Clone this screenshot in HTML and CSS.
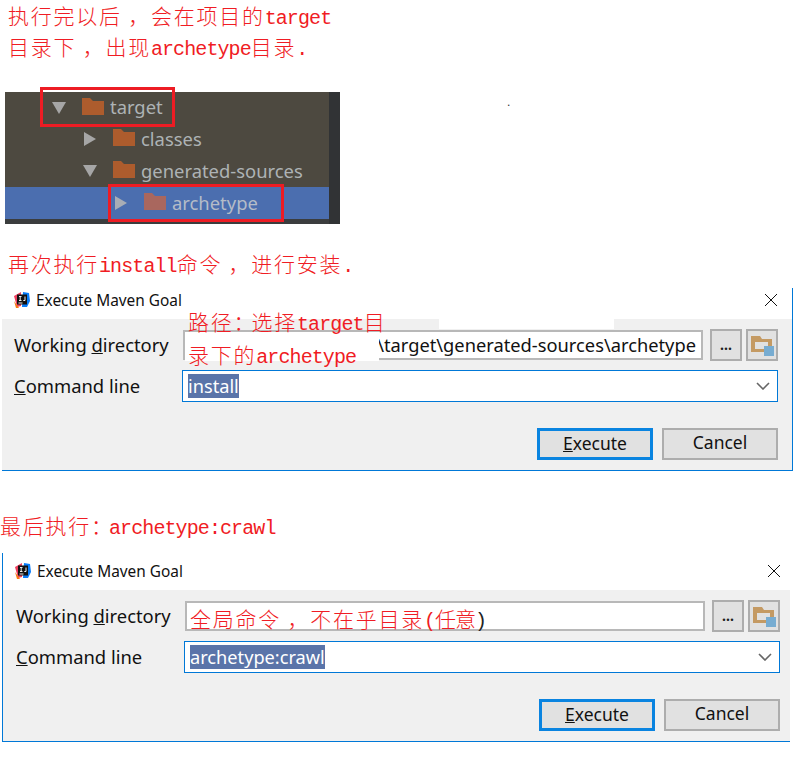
FILE: index.html
```html
<!DOCTYPE html>
<html lang="zh">
<head>
<meta charset="utf-8">
<title>Execute Maven Goal</title>
<link rel="stylesheet" href="styles.css">
</head>
<body>
<div class="page">
  <p class="note note-first">执行完以后 ，会在项目的<span class="lat">target</span><br>目录下 ，出现<span class="lat">archetype</span>目录<span class="lat">.</span></p>

  <div class="tree">
    <div class="tree-rows">
      <div class="row depth0">
        <svg class="tri" viewBox="0 0 14 14"><path d="M0 1H14L7 13Z"/></svg>
        <svg class="folder" viewBox="0 0 22 17"><path d="M0 0H8L11 3H22V17H0Z"/></svg>
        <span>target</span>
      </div>
      <div class="row depth1">
        <svg class="tri" viewBox="0 0 14 14"><path d="M1 0L13 7L1 14Z"/></svg>
        <svg class="folder" viewBox="0 0 22 17"><path d="M0 0H8L11 3H22V17H0Z"/></svg>
        <span>classes</span>
      </div>
      <div class="row depth1">
        <svg class="tri" viewBox="0 0 14 14"><path d="M0 1H14L7 13Z"/></svg>
        <svg class="folder" viewBox="0 0 22 17"><path d="M0 0H8L11 3H22V17H0Z"/></svg>
        <span>generated-sources</span>
      </div>
      <div class="row depth2 selected">
        <svg class="tri" viewBox="0 0 14 14"><path d="M1 0L13 7L1 14Z"/></svg>
        <svg class="folder" viewBox="0 0 22 17"><path d="M0 0H8L11 3H22V17H0Z"/></svg>
        <span>archetype</span>
      </div>
    </div>
    <div class="tree-scroll"></div>
    <div class="redbox redbox-a"></div>
    <div class="redbox redbox-b"></div>
    <span class="speck">.</span>
  </div>

  <p class="note note-second">再次执行<span class="lat">install</span>命令 ，进行安装<span class="lat">.</span></p>

  <section class="dialog dialog-a">
    <header class="titlebar">
      <svg class="logo" viewBox="0 0 16 16">
        <path fill="#f0405f" d="M0 4L7 0L7 14L3 15Z"/>
        <path fill="#f97a12" d="M0 9L5 16H2Z"/>
        <path fill="#087cfa" d="M9 0L15 1L16 9L13 15L8 15Z"/>
        <rect x="3" y="2.5" width="10" height="10" fill="#111"/>
        <rect x="4.5" y="10.5" width="4" height="1" fill="#eee"/>
        <path stroke="#eee" stroke-width="1" fill="none" d="M5 4.5H7.5M6.2 4.5V8.5M5 8.5H7.5M11 4.5V8.5H9.3"/>
      </svg>
      <span class="title">Execute Maven Goal</span>
      <svg class="close" viewBox="0 0 12 12"><path d="M0 0L12 12M12 0L0 12"/></svg>
    </header>
    <div class="content">
      <div class="form">
        <label class="label"><span>Working <u>d</u>irectory</span></label>
        <div class="dirline">
          <div class="input path">\target\generated-sources\archetype</div>
          <button class="tool">...</button>
          <button class="tool">
            <svg class="ficon" viewBox="0 0 24 22"><path d="M1 2H10L12 5H22V18H1Z M5 8V15H18V8Z" fill="#c49a63" fill-rule="evenodd"/><rect x="14" y="12" width="10" height="10" fill="#77acd1"/></svg>
          </button>
        </div>
        <label class="label"><span><u>C</u>ommand line</span></label>
        <div class="combo">
          <span class="sel">install</span>
          <svg class="chev" viewBox="0 0 14 8"><path d="M1 1L7 7L13 1"/></svg>
        </div>
      </div>
      <div class="actions">
        <button class="btn primary"><u>E</u>xecute</button>
        <button class="btn">Cancel</button>
      </div>
      <div class="patch patch-input"></div>
      <div class="patch patch-top"></div>
      <p class="note overlay">路径<span class="tight">：</span>选择<span class="lat">target</span>目<br>录下的<span class="lat">archetype</span></p>
    </div>
  </section>

  <p class="note note-third">最后执行<span class="tight">：</span><span class="lat">archetype:crawl</span></p>

  <section class="dialog dialog-b">
    <header class="titlebar">
      <svg class="logo" viewBox="0 0 16 16">
        <path fill="#f0405f" d="M0 4L7 0L7 14L3 15Z"/>
        <path fill="#f97a12" d="M0 9L5 16H2Z"/>
        <path fill="#087cfa" d="M9 0L15 1L16 9L13 15L8 15Z"/>
        <rect x="3" y="2.5" width="10" height="10" fill="#111"/>
        <rect x="4.5" y="10.5" width="4" height="1" fill="#eee"/>
        <path stroke="#eee" stroke-width="1" fill="none" d="M5 4.5H7.5M6.2 4.5V8.5M5 8.5H7.5M11 4.5V8.5H9.3"/>
      </svg>
      <span class="title">Execute Maven Goal</span>
      <svg class="close" viewBox="0 0 12 12"><path d="M0 0L12 12M12 0L0 12"/></svg>
    </header>
    <div class="content">
      <div class="form">
        <label class="label"><span>Working <u>d</u>irectory</span></label>
        <div class="dirline">
          <div class="input scribble"><span class="note-inline">全局命令 ，不在乎目录<span class="lat">(</span><span class="snug">任意</span><span class="lat dark">)</span></span></div>
          <button class="tool">...</button>
          <button class="tool">
            <svg class="ficon" viewBox="0 0 24 22"><path d="M1 2H10L12 5H22V18H1Z M5 8V15H18V8Z" fill="#c49a63" fill-rule="evenodd"/><rect x="14" y="12" width="10" height="10" fill="#77acd1"/></svg>
          </button>
        </div>
        <label class="label"><span><u>C</u>ommand line</span></label>
        <div class="combo">
          <span class="sel">archetype:crawl</span>
          <svg class="chev" viewBox="0 0 14 8"><path d="M1 1L7 7L13 1"/></svg>
        </div>
      </div>
      <div class="actions">
        <button class="btn primary"><u>E</u>xecute</button>
        <button class="btn">Cancel</button>
      </div>
    </div>
  </section>
</div>
</body>
</html>
```
FILE: styles.css
```css
* { box-sizing: border-box; }
html, body { margin: 0; padding: 0; background: #fff; }
.page { width: 799px; height: 758px; overflow: hidden; }

.note, .note-inline {
  margin: 0;
  color: #f01c24;
  font-family: "Noto Sans CJK SC", "Liberation Mono", sans-serif;
  font-size: 21px;
  font-weight: 300;
  letter-spacing: 1.75px;
  line-height: 31px;
}
.lat {
  font-family: "Liberation Mono", "Noto Sans CJK SC", monospace;
  font-size: 20px;
  font-weight: 400;
  letter-spacing: -0.9px;
  line-height: 1;
}
.tight { letter-spacing: -3px; }
.snug { letter-spacing: -1px; }
.dark { color: #222; }
.note-first { padding-left: 8px; height: 64px; }
.note-second { padding-left: 8px; height: 33px; margin-top: 24px; }
.note-third { padding-left: 0; height: 34px; margin-top: 39px; }

/* project tree */
.tree {
  position: relative;
  display: flex;
  width: 335px;
  height: 132px;
  margin: 28px 0 0 5px;
  background: #3b3d3e;
}
.tree-rows { flex: 1; background: linear-gradient(#4d4940, #4d4940) no-repeat top / 100% 95px; }
.tree-scroll { width: 11px; background: #313335; }
.row {
  display: flex;
  align-items: center;
  height: 32px;
  color: #adb3b5;
  font-family: "Noto Sans", sans-serif;
  font-size: 18.4px;
}
.row:first-child { height: 31px; }
.row span { margin-top: -2px; }
.depth0 { padding-left: 47px; }
.depth1 { padding-left: 78px; }
.depth2 { padding-left: 109px; }
.selected { background: #4b6eaf; color: #b4bcc8; }
.tri { width: 14px; height: 14px; margin-right: 16px; fill: #a6a6a6; flex: none; }
.folder { width: 22px; height: 17px; margin-right: 6px; margin-top: -3px; fill: #ad5c2d; flex: none; }
.selected .folder { fill: #a9675e; }
.selected .tri { fill: #a8adb5; }
.redbox { position: absolute; border: 3px solid #ed1c24; }
.redbox-a { left: 35px; top: -5px; width: 135px; height: 40px; }
.redbox-b { left: 103px; top: 92px; width: 176px; height: 38px; }
.speck { position: absolute; left: 502px; top: 0; color: #333; font: 12px/20px "Liberation Sans", sans-serif; }

/* dialogs */
.dialog { background: #fff; font-family: "Noto Sans", sans-serif; color: #111; }
.dialog-a { width: 791px; margin: 7px 0 0 2px; border-right: 1px solid #0078d7; }
.dialog-b { width: 788px; margin: 9px 0 0 2px; border-left: 1px solid #0078d7; }
.titlebar { display: flex; align-items: center; height: 31px; padding: 0 15px 7px 12px; }
.dialog-b .titlebar { height: 37px; padding: 0 10px 1px 12px; }
.logo { width: 16px; height: 16px; flex: none; margin-right: 6px; }
.title { flex: 1; font-size: 15.4px; }
.close { width: 12px; height: 12px; stroke: #111; stroke-width: 1; fill: none; }
.content {
  position: relative;
  height: 152px;
  padding: 10px 14px 0 12px;
  background: #f0f0f0;
  border-bottom: 1px solid #0078d7;
}
.dialog-b .content { padding: 10px 10px 0 13px; }
.form { display: grid; grid-template-columns: 168px 1fr; row-gap: 9px; }
.label { display: flex; align-items: center; font-size: 18.4px; }
.label span { margin-top: -2px; }
.dirline { display: flex; gap: 4px; height: 32px; }
.input {
  flex: 1;
  min-width: 0;
  margin: 1px 3px 1px 1px;
  padding-right: 5px;
  background: #fff;
  border: 2px solid #b8b8b8;
  font-size: 18.3px;
  line-height: 26px;
  white-space: nowrap;
  overflow: hidden;
}
.path { text-align: right; }
.scribble { padding-left: 3px; line-height: 32px; overflow: visible; }
.tool {
  display: flex;
  align-items: center;
  justify-content: center;
  width: 32px;
  height: 32px;
  padding: 0;
  background: #e1e1e1;
  border: 2px solid #adadad;
  font-family: "Noto Sans", sans-serif;
  font-size: 14px;
  font-weight: 700;
  color: #222;
  line-height: 1;
}
.ficon { width: 24px; height: 22px; }
.combo {
  display: flex;
  align-items: center;
  justify-content: space-between;
  height: 32px;
  padding: 0 7px 0 5px;
  background: #fff;
  border: 1px solid #0078d7;
}
.sel {
  display: block;
  background: #5a74a9;
  color: #fff;
  font-size: 18.2px;
  line-height: 24px;
}
.chev { width: 14px; height: 8px; fill: none; stroke: #666; stroke-width: 1.6; }
.actions { display: flex; justify-content: flex-end; gap: 9px; margin-top: 26px; }
.btn {
  width: 116px;
  height: 32px;
  padding: 0 0 4px;
  background: #e1e1e1;
  border: 2px solid #adadad;
  font-family: "Noto Sans", sans-serif;
  font-size: 17.5px;
  color: #111;
  line-height: 24px;
}
.primary { border: 3px solid #0a84e0; padding-bottom: 6px; }

/* hand-made annotation pasted over the first dialog */
.patch { position: absolute; background: #fff; }
.patch-input { left: 183px; top: 14px; width: 194px; height: 28px; }
.patch-top { left: 437px; top: 0; width: 175px; height: 10px; }
.overlay { position: absolute; left: 186px; top: -14px; line-height: 33px; }
```
